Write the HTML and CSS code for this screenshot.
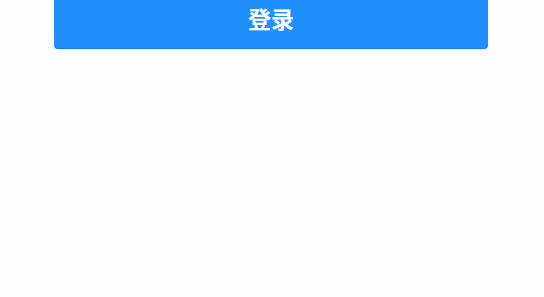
FILE: index.html
```html
<!DOCTYPE html>
<html lang="zh-CN">
<head>
    <meta charset="UTF-8">
    <meta name="viewport" content="width=device-width, initial-scale=1.0">
    <title>登录</title>
    <link rel="stylesheet" href="styles.css">
</head>
<body>
    <section class="login">
        <form class="login-form">
            <button type="submit" class="login-btn">登录</button>
        </form>
    </section>
</body>
</html>
```

FILE: styles.css
```css
body {
    margin: 0;
    padding: 0;
    background-color: #fdfdfd;
    font-family: 'Noto Sans CJK SC', 'Noto Sans', sans-serif;
}

.login {
    padding: 0 56px 0 54px;
}

.login-form {
    margin-top: -8px;
}

.login-btn {
    display: block;
    width: 100%;
    height: 57px;
    padding: 0 0 5px;
    background: #1e8ffc;
    color: #fff;
    border: none;
    border-bottom: 1px solid #1780e8;
    border-radius: 4px;
    font-family: inherit;
    font-size: 23px;
    font-weight: bold;
    cursor: pointer;
}
```
